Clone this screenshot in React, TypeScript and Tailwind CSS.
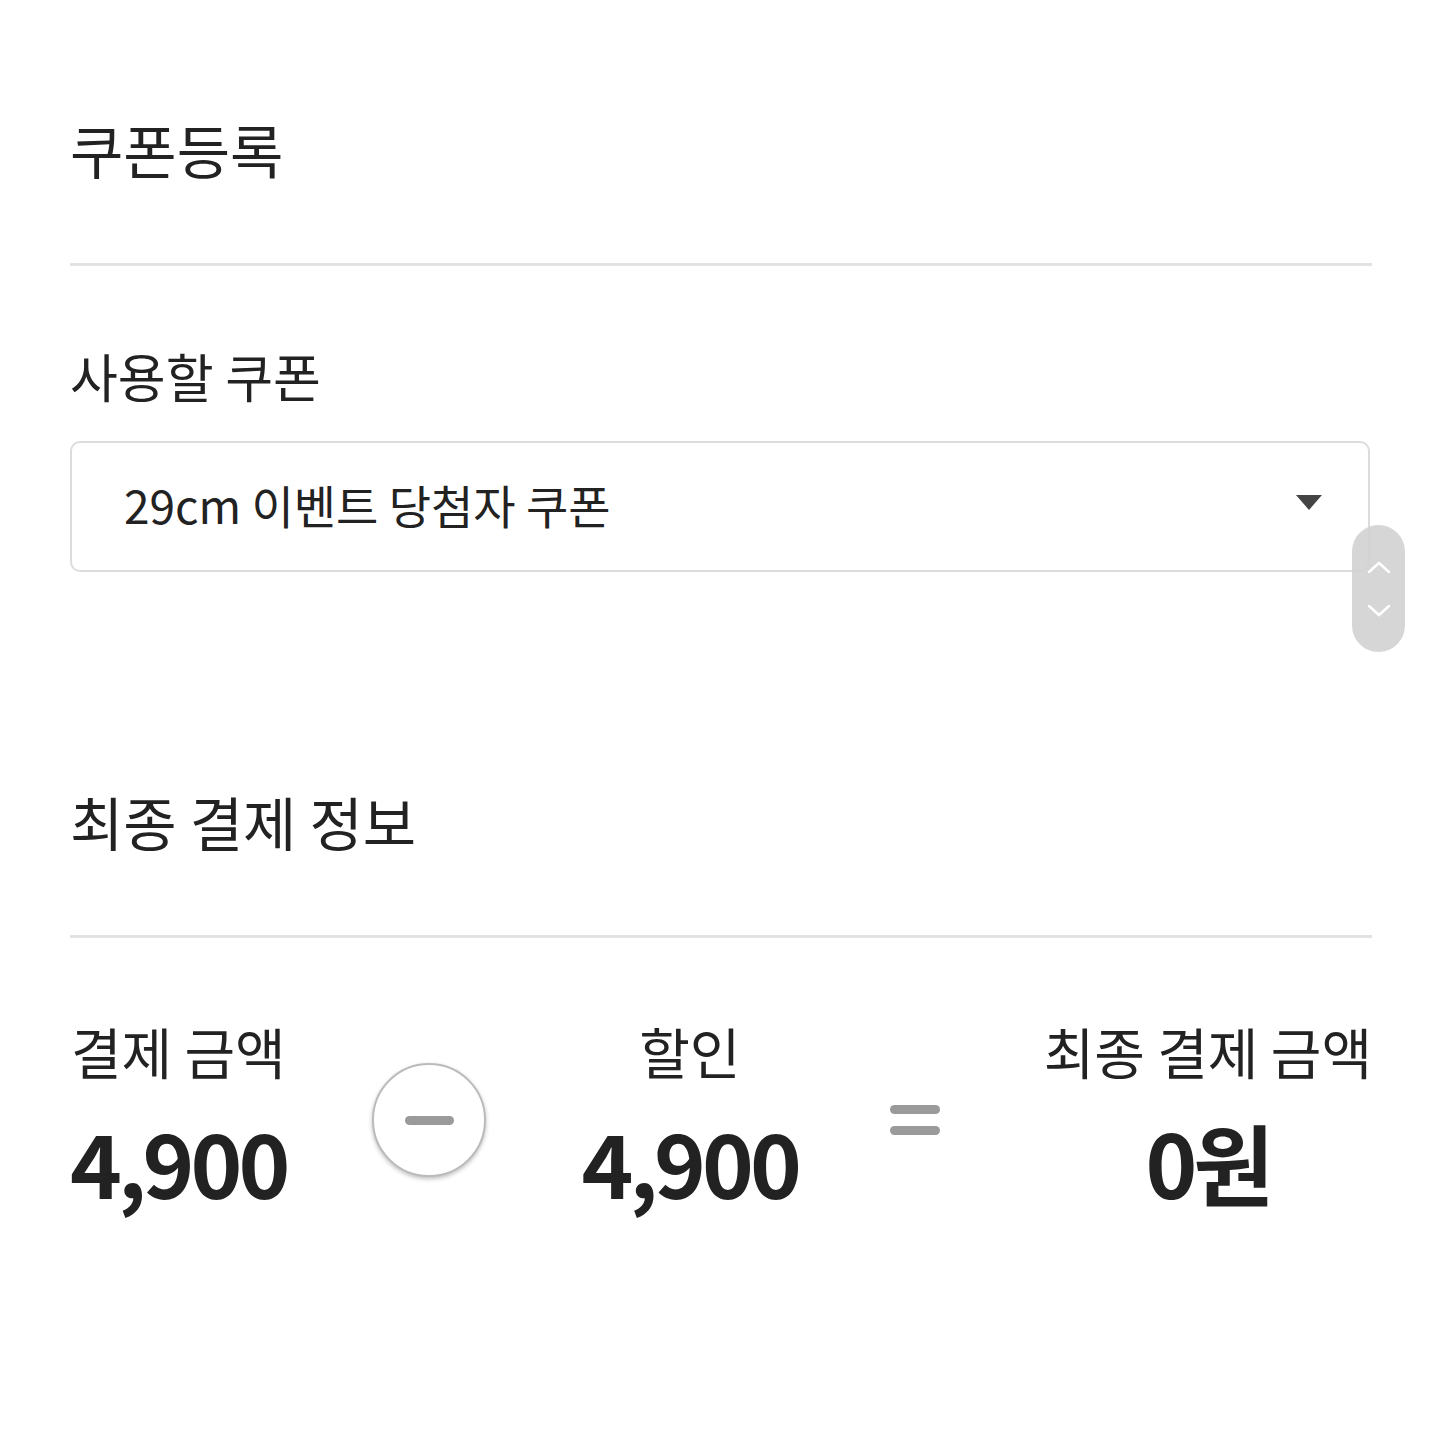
import React from 'react';

const font = { fontFamily: '"Noto Sans CJK KR", "Noto Sans", sans-serif' };

const Column: React.FC<{ label: string; value: string; className?: string }> = ({ label, value, className }) => (
  <div className={`flex flex-col items-center ${className ?? ''}`}>
    <div className="text-[55px] leading-none text-[#222]">{label}</div>
    <div className="mt-[39px] text-[88px] font-bold leading-none tracking-[-0.045em] text-[#222]">
      {value}
    </div>
  </div>
);

const App: React.FC = () => {
  return (
    <div className="min-h-[1440px] bg-white px-[70px] pt-[120px] text-[#222]" style={font}>
      <h1 className="text-[58px] font-normal leading-none">쿠폰등록</h1>
      <div className="mt-[85px] h-[3px] w-[1302px] bg-[#e2e2e2]" />

      <h2 className="mt-[84px] text-[52px] font-normal leading-none">사용할 쿠폰</h2>
      <div className="relative mt-[39px] w-[1300px]">
        <div className="flex h-[131px] items-center justify-between rounded-[10px] border-2 border-[#dcdcdc] pl-[52px] pr-[46px]">
          <span className="-mt-[6px] text-[46px] leading-none">29cm 이벤트 당첨자 쿠폰</span>
          <svg width="26" height="15" viewBox="0 0 26 15" className="-mt-[8px]">
            <path d="M0 0 H26 L13 15 Z" fill="#444" />
          </svg>
        </div>
        <div className="absolute left-[1282px] top-[84px] flex h-[127px] w-[53px] flex-col items-center justify-center gap-[30px] rounded-full bg-[#d2d2d2]/90">
          <svg width="24" height="14" viewBox="0 0 24 14">
            <path d="M2 12 L12 3 L22 12" fill="none" stroke="#fff" strokeWidth="2.5" strokeLinecap="round" />
          </svg>
          <svg width="24" height="14" viewBox="0 0 24 14">
            <path d="M2 2 L12 11 L22 2" fill="none" stroke="#fff" strokeWidth="2.5" strokeLinecap="round" />
          </svg>
        </div>
      </div>

      <h2 className="mt-[220px] text-[58px] font-normal leading-none">최종 결제 정보</h2>
      <div className="mt-[85px] h-[3px] w-[1302px] bg-[#e2e2e2]" />

      <div className="mt-[85px] flex w-[1302px] items-center">
        <Column label="결제 금액" value="4,900" />
        <div className="ml-[86px] mt-[12px] flex h-[114px] w-[114px] items-center justify-center rounded-full border-2 border-[#bbb] bg-white shadow-[0_2px_4px_rgba(0,0,0,0.25)]">
          <div className="h-[9px] w-[49px] rounded-full bg-[#9a9a9a]" />
        </div>
        <Column label="할인" value="4,900" className="ml-[95px]" />
        <div className="ml-[92px] mt-[12px] flex flex-col gap-[12px]">
          <div className="h-[9px] w-[50px] rounded-full bg-[#9a9a9a]" />
          <div className="h-[9px] w-[50px] rounded-full bg-[#9a9a9a]" />
        </div>
        <Column label="최종 결제 금액" value="0원" className="ml-auto" />
      </div>
    </div>
  );
};

export default App;
